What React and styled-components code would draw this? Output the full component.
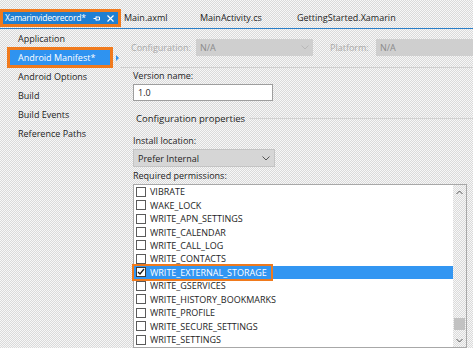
import React from 'react'
import styled, { createGlobalStyle } from 'styled-components'

const GlobalStyle = createGlobalStyle`
  html, body {
    margin: 0;
    padding: 0;
  }
  body {
    width: 473px;
    height: 348px;
    overflow: hidden;
    font-family: "Open Sans", "Noto Sans", sans-serif;
    font-size: 9px;
    color: #1e1e1e;
    background-color: #ececec;
    background-image: conic-gradient(#dadada 25%, #f7f7f7 0 50%, #dadada 0 75%, #f7f7f7 0);
    background-size: 2px 2px;
  }
`

const tabs = ['Main.axml', 'MainActivity.cs', 'GettingStarted.Xamarin']
const pages = ['Application', 'Android Manifest*', 'Android Options', 'Build', 'Build Events', 'Reference Paths']
const permissions = [
  'VIBRATE', 'WAKE_LOCK', 'WRITE_APN_SETTINGS', 'WRITE_CALENDAR', 'WRITE_CALL_LOG',
  'WRITE_CONTACTS', 'WRITE_EXTERNAL_STORAGE', 'WRITE_GSERVICES', 'WRITE_HISTORY_BOOKMARKS',
  'WRITE_PROFILE', 'WRITE_SECURE_SETTINGS', 'WRITE_SETTINGS',
]

const App = () => {
  return (
    <Page>
      <GlobalStyle />
      <TabBar>
        <ActiveTab>
          <TabTitle>Xamarinvideorecord*</TabTitle>
          <TabIcons>
            <svg width="8" height="7" viewBox="0 0 8 7">
              <path d="M0.5 3.5h2.5M3 1.5v4M3 2h3.5v3H3" stroke="#fff" fill="none" strokeWidth="1" />
            </svg>
            <svg width="7" height="7" viewBox="0 0 7 7">
              <path d="M0.5 0.5l6 6M6.5 0.5l-6 6" stroke="#fff" strokeWidth="1.2" />
            </svg>
          </TabIcons>
        </ActiveTab>
        {tabs.map(t => <Tab key={t}>{t}</Tab>)}
      </TabBar>
      <Body>
        <Sidebar>
          {pages.map((p, i) => (
            <NavItem key={p} active={i === 1}>
              {i === 1 ? <Selected>{p}<Pointer /></Selected> : p}
            </NavItem>
          ))}
        </Sidebar>
        <Content>
          <ConfigRow>
            <DimLabel width={65}>Configuration:</DimLabel>
            <DimCombo width={117}>N/A<Chevron color="#b8b8b8" /></DimCombo>
            <DimLabel width={46} style={{ marginLeft: 17 }}>Platform:</DimLabel>
            <DimCombo width={100}>N/A</DimCombo>
          </ConfigRow>
          <Rule />
          <Form>
            <Label>Version name:</Label>
            <TextBox>1.0</TextBox>
            <Group>
              <span>Configuration properties</span>
              <GroupLine />
            </Group>
            <Label>Install location:</Label>
            <Combo>Prefer Internal<Chevron color="#555" /></Combo>
            <Label>Required permissions:</Label>
            <ListBox>
              <Items>
                {permissions.map(p => {
                  const on = p === 'WRITE_EXTERNAL_STORAGE'
                  return (
                    <Item key={p} selected={on}>
                      <Check on={on}>
                        {on && (
                          <svg width="8" height="8" viewBox="0 0 8 8">
                            <path d="M1 4l2 2 4-5" stroke="#1e1e1e" strokeWidth="1.3" fill="none" />
                          </svg>
                        )}
                      </Check>
                      {on ? <Focus>{p}</Focus> : p}
                    </Item>
                  )
                })}
              </Items>
              <ScrollBar>
                <Arrow>
                  <svg width="7" height="5" viewBox="0 0 7 5"><path d="M0.5 4l3-3 3 3" stroke="#555" fill="none" /></svg>
                </Arrow>
                <Track><Thumb /></Track>
                <Arrow>
                  <svg width="7" height="5" viewBox="0 0 7 5"><path d="M0.5 1l3 3 3-3" stroke="#555" fill="none" /></svg>
                </Arrow>
              </ScrollBar>
            </ListBox>
          </Form>
        </Content>
      </Body>
    </Page>
  )
}

const Chevron = ({ color }) => (
  <ChevronBox>
    <svg width="8" height="5" viewBox="0 0 8 5">
      <path d="M0.5 0.5l3.5 3.5 3.5-3.5" stroke={color} fill="none" />
    </svg>
  </ChevronBox>
)

const Page = styled.div`
  display: flex;
  flex-direction: column;
  width: 473px;
  height: 348px;
  overflow: hidden;
`

const TabBar = styled.div`
  display: flex;
  align-items: flex-start;
  height: 20px;
  margin-top: 9px;
  border-bottom: 1px solid #2a7ec8;
`

const ActiveTab = styled.div`
  display: flex;
  align-items: center;
  box-sizing: border-box;
  width: 121px;
  height: 18px;
  padding: 0 4px 0 2px;
  background: #1f7fd2;
  color: #fff;
  border: 3px solid #f07a1d;
  flex-shrink: 0;
`

const TabTitle = styled.span`
  flex: 1;
  font-size: 8.6px;
  letter-spacing: -0.3px;
`

const TabIcons = styled.div`
  display: flex;
  gap: 6px;
  align-items: center;
`

const Tab = styled.div`
  padding-left: 3px;
  width: 73px;
  line-height: 18px;
  flex-shrink: 0;
  &:nth-of-type(3) { width: 94px; }
`

const Body = styled.div`
  display: flex;
  flex: 1;
`

const Sidebar = styled.div`
  width: 120px;
  flex-shrink: 0;
  display: flex;
  flex-direction: column;
`

const NavItem = styled.div`
  height: 19px;
  display: flex;
  align-items: center;
  padding-left: ${p => (p.active ? 10 : 18)}px;
`

const Selected = styled.div`
  position: relative;
  width: 92px;
  height: 15px;
  padding-left: 8px;
  display: flex;
  align-items: center;
  background: #2f93f0;
  color: #fff;
  outline: 3px solid #f07a1d;
`

const Pointer = styled.div`
  position: absolute;
  right: -9px;
  top: 5px;
  width: 0;
  height: 0;
  border-left: 3px solid #2f93f0;
  border-top: 3px solid transparent;
  border-bottom: 3px solid transparent;
`

const Content = styled.div`
  flex: 1;
  min-width: 0;
  display: flex;
  flex-direction: column;
`

const ConfigRow = styled.div`
  display: flex;
  align-items: center;
  height: 17px;
  margin-top: 10px;
  padding-left: 11px;
`

const DimLabel = styled.span`
  color: #a9a9a9;
  width: ${p => p.width}px;
  flex-shrink: 0;
`

const DimCombo = styled.div`
  box-sizing: border-box;
  width: ${p => p.width}px;
  height: 17px;
  padding-left: 4px;
  display: flex;
  align-items: center;
  justify-content: space-between;
  background: #cfcfcf;
  color: #8a8a8a;
  flex-shrink: 0;
`

const ChevronBox = styled.span`
  display: flex;
  padding-right: 4px;
`

const Rule = styled.div`
  height: 1px;
  background: #cfcfcf;
  margin-top: 11px;
`

const Form = styled.div`
  display: flex;
  flex-direction: column;
  padding-left: 13px;
`

const Label = styled.div`
  height: 12px;
  line-height: 12px;
  margin-top: 2px;
`

const TextBox = styled.div`
  box-sizing: border-box;
  width: 140px;
  height: 17px;
  margin-top: 2px;
  padding-left: 4px;
  display: flex;
  align-items: center;
  background: #fff;
  border: 1px solid #9e9e9e;
`

const Group = styled.div`
  display: flex;
  align-items: center;
  height: 12px;
  margin-top: 11px;
  padding-left: 3px;
  margin-bottom: 9px;
  font-size: 9.5px;
`

const GroupLine = styled.div`
  flex: 1;
  height: 1px;
  background: #d2d2d2;
  margin-left: 4px;
`

const Combo = styled.div`
  box-sizing: border-box;
  width: 142px;
  height: 18px;
  margin-top: 2px;
  margin-bottom: 1px;
  padding-left: 4px;
  display: flex;
  align-items: center;
  justify-content: space-between;
  background: #d6d6d6;
  border: 1px solid #c4c4c4;
`

const ListBox = styled.div`
  box-sizing: border-box;
  display: flex;
  width: 334px;
  height: 164px;
  margin-top: 2px;
  background: #fff;
  border: 1px solid #a8a8a8;
`

const Items = styled.div`
  flex: 1;
  display: flex;
  flex-direction: column;
`

const Item = styled.div`
  display: flex;
  align-items: center;
  height: 13.45px;
  padding-left: 2px;
  background: ${p => (p.selected ? '#3296f2' : 'transparent')};
  color: ${p => (p.selected ? '#fff' : '#1e1e1e')};
  position: relative;
`

const Check = styled.span`
  box-sizing: border-box;
  width: 10px;
  height: 10px;
  margin-right: 4px;
  display: flex;
  align-items: center;
  justify-content: center;
  background: #fff;
  border: 1px solid ${p => (p.on ? '#3a3a3a' : '#5a5a5a')};
`

const Focus = styled.span`
  &::before {
    content: '';
    position: absolute;
    left: -2px;
    top: -2px;
    width: 141px;
    height: 17px;
    box-sizing: border-box;
    border: 2px solid #f07a1d;
  }
`

const ScrollBar = styled.div`
  width: 13px;
  display: flex;
  flex-direction: column;
  background-color: #ececec;
  background-image: conic-gradient(#dadada 25%, #f7f7f7 0 50%, #dadada 0 75%, #f7f7f7 0);
  background-size: 2px 2px;
`

const Arrow = styled.div`
  height: 14px;
  display: flex;
  align-items: center;
  justify-content: center;
`

const Track = styled.div`
  flex: 1;
  display: flex;
  flex-direction: column;
  justify-content: flex-end;
  padding: 0 1px 3px;
`

const Thumb = styled.div`
  height: 12px;
  background: #c2c2c2;
`

export default App
